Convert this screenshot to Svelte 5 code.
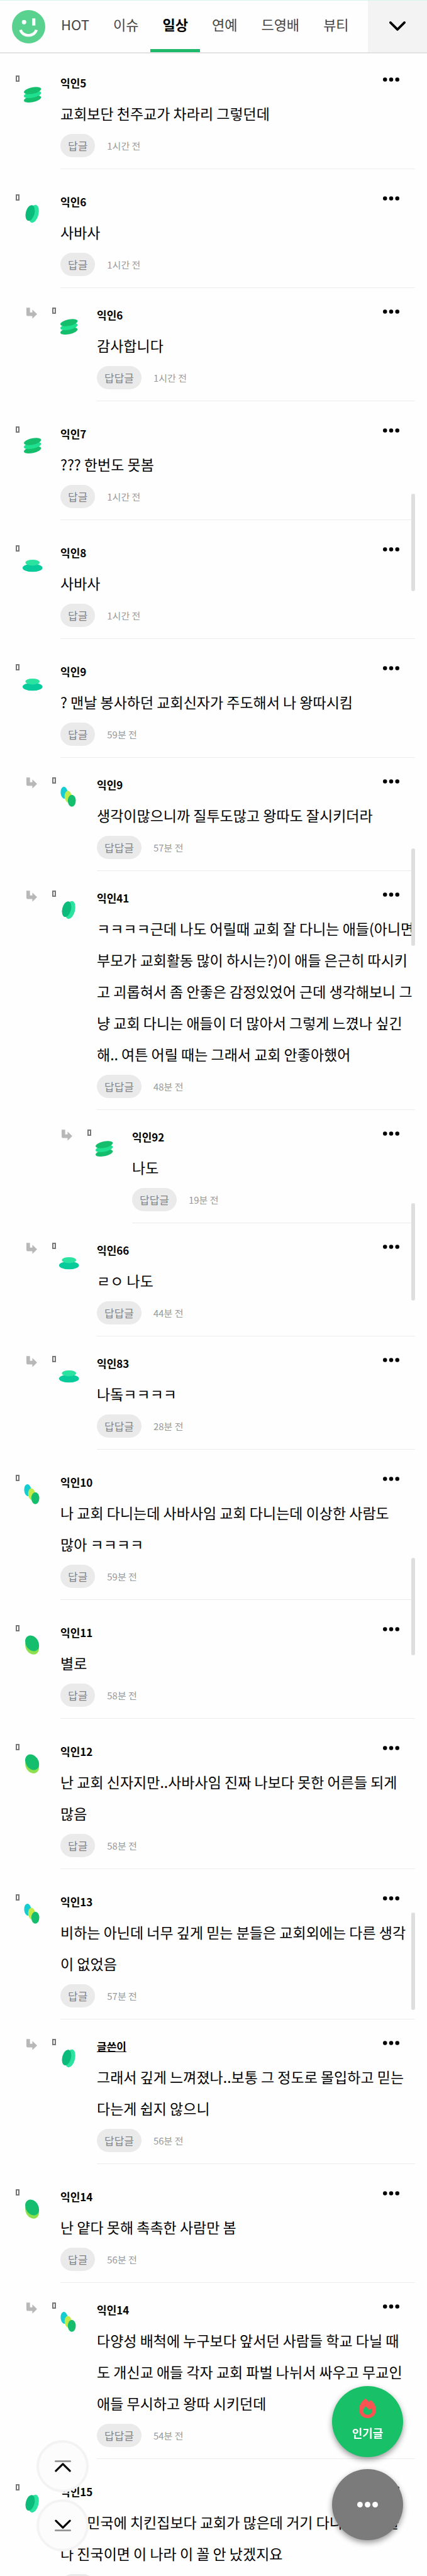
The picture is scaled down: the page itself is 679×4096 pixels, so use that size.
<script lang="ts">
  type Avatar = "stack" | "leaf" | "cup" | "trio" | "pebble"

  interface Comment {
    name: string
    avatar: Avatar
    level: number
    text: string
    time?: string
    writer?: boolean
  }

  const tabs = ["HOT", "이슈", "일상", "연예", "드영배", "뷰티"]
  let activeTab = $state("일상")

  const comments: Comment[] = [
    { name: "익인5", avatar: "stack", level: 0, text: "교회보단 천주교가 차라리 그렇던데", time: "1시간 전" },
    { name: "익인6", avatar: "leaf", level: 0, text: "사바사", time: "1시간 전" },
    { name: "익인6", avatar: "stack", level: 1, text: "감사합니다", time: "1시간 전" },
    { name: "익인7", avatar: "stack", level: 0, text: "??? 한번도 못봄", time: "1시간 전" },
    { name: "익인8", avatar: "cup", level: 0, text: "사바사", time: "1시간 전" },
    { name: "익인9", avatar: "cup", level: 0, text: "? 맨날 봉사하던 교회신자가 주도해서 나 왕따시킴", time: "59분 전" },
    { name: "익인9", avatar: "trio", level: 1, text: "생각이많으니까 질투도많고 왕따도 잘시키더라", time: "57분 전" },
    {
      name: "익인41",
      avatar: "leaf",
      level: 1,
      text: "ㅋㅋㅋㅋ근데 나도 어릴때 교회 잘 다니는 애들(아니면\n부모가 교회활동 많이 하시는?)이 애들 은근히 따시키\n고 괴롭혀서 좀 안좋은 감정있었어 근데 생각해보니 그\n냥 교회 다니는 애들이 더 많아서 그렇게 느꼈나 싶긴\n해.. 여튼 어릴 때는 그래서 교회 안좋아했어",
      time: "48분 전",
    },
    { name: "익인92", avatar: "stack", level: 2, text: "나도", time: "19분 전" },
    { name: "익인66", avatar: "cup", level: 1, text: "ㄹㅇ 나도", time: "44분 전" },
    { name: "익인83", avatar: "cup", level: 1, text: "나돜ㅋㅋㅋㅋ", time: "28분 전" },
    {
      name: "익인10",
      avatar: "trio",
      level: 0,
      text: "나 교회 다니는데 사바사임 교회 다니는데 이상한 사람도\n많아 ㅋㅋㅋㅋ",
      time: "59분 전",
    },
    { name: "익인11", avatar: "pebble", level: 0, text: "별로", time: "58분 전" },
    {
      name: "익인12",
      avatar: "pebble",
      level: 0,
      text: "난 교회 신자지만..사바사임 진짜 나보다 못한 어른들 되게\n많음",
      time: "58분 전",
    },
    {
      name: "익인13",
      avatar: "trio",
      level: 0,
      text: "비하는 아닌데 너무 깊게 믿는 분들은 교회외에는 다른 생각\n이 없었음",
      time: "57분 전",
    },
    {
      name: "글쓴이",
      avatar: "leaf",
      level: 1,
      text: "그래서 깊게 느껴졌나..보통 그 정도로 몰입하고 믿는\n다는게 쉽지 않으니",
      time: "56분 전",
      writer: true,
    },
    { name: "익인14", avatar: "pebble", level: 0, text: "난 얕다 못해 촉촉한 사람만 봄", time: "56분 전" },
    {
      name: "익인14",
      avatar: "trio",
      level: 1,
      text: "다양성 배척에 누구보다 앞서던 사람들 학교 다닐 때\n도 개신교 애들 각자 교회 파벌 나뉘서 싸우고 무교인\n애들 무시하고 왕따 시키던데",
      time: "54분 전",
    },
    {
      name: "익인15",
      avatar: "leaf",
      level: 0,
      text: "대한민국에 치킨집보다 교회가 많은데 거기 다니는 사람들\n다 진국이면 이 나라 이 꼴 안 났겠지요",
    },
  ]

  const thumbs = [0, 1, 2, 3, 4].map((i) => 785 + i * 564)
</script>

{#snippet avatarIcon(kind: Avatar)}
  <svg class="avatar" viewBox="0 0 60 60" aria-hidden="true">
    {#if kind === "stack"}
      <ellipse cx="28" cy="43" rx="22" ry="8" transform="rotate(-12 28 43)" fill="#15be6c" />
      <ellipse cx="28" cy="32" rx="22" ry="8" transform="rotate(-12 28 32)" fill="#1ee08f" />
      <ellipse cx="28" cy="22" rx="22" ry="8" transform="rotate(-12 28 22)" fill="#15be6c" />
    {:else if kind === "leaf"}
      <ellipse cx="31" cy="33" rx="12" ry="23" transform="rotate(14 31 33)" fill="#2be3a0" />
      <ellipse cx="22" cy="31" rx="11" ry="20" transform="rotate(14 22 31)" fill="#0bbb7c" />
    {:else if kind === "cup"}
      <ellipse cx="28" cy="41" rx="25" ry="10" fill="#08cb9c" />
      <ellipse cx="28" cy="28" rx="18" ry="7.5" fill="#2be3a0" />
    {:else if kind === "trio"}
      <ellipse cx="16" cy="23" rx="9" ry="15" transform="rotate(-6 16 23)" fill="#13cdd2" />
      <ellipse cx="26" cy="33" rx="9" ry="15" transform="rotate(-6 26 33)" fill="#c0ea4a" />
      <ellipse cx="35" cy="43" rx="10" ry="15" fill="#15be6c" />
    {:else}
      <ellipse cx="27" cy="39" rx="16" ry="20" transform="rotate(-32 27 39)" fill="#8fe04e" />
      <ellipse cx="27" cy="30" rx="16" ry="21" transform="rotate(-32 27 30)" fill="#15be6c" />
    {/if}
  </svg>
{/snippet}

<div class="page">
  <header>
    <a class="logo" href="#home" aria-label="홈">
      <svg viewBox="0 0 84 84" width="53" height="53">
        <circle cx="42" cy="42" r="42" fill="#5ad28f" />
        <circle cx="30.500" cy="30.500" r="5.500" fill="#fff" />
        <rect x="51" y="21" width="8" height="18" fill="#fff" />
        <path d="M21.500 50a20.500 18 0 0 0 40 0" fill="none" stroke="#fff" stroke-width="7" />
      </svg>
    </a>
    <nav>
      {#each tabs as tab}
        <button class="tab" class:active={tab === activeTab} onclick={() => (activeTab = tab)}>{tab}</button>
      {/each}
    </nav>
    <button class="expand" aria-label="메뉴 펼치기">
      <svg viewBox="0 0 42 26" width="26" height="16">
        <path d="M3 3l18 18L39 3" fill="none" stroke="#000" stroke-width="6" stroke-linecap="round" stroke-linejoin="round" />
      </svg>
    </button>
  </header>

  <ul class="comments">
    {#each comments as comment}
      <li class="comment" class:reply={comment.level > 0} class:deep={comment.level > 1}>
        {#if comment.level > 0}
          <svg class="arrow" viewBox="0 0 27 28" aria-hidden="true">
            <path d="M0 0h9v12h6V5l12 11.500L15 28v-7H3Q0 21 0 18z" fill="#b8b8b8" />
          </svg>
        {/if}
        <div class="side">
          <span class="blank"></span>
          {@render avatarIcon(comment.avatar)}
        </div>
        <article>
          <div class="head">
            <strong class:writer={comment.writer}>{comment.name}</strong>
            <button class="more" aria-label="더보기">
              <svg viewBox="0 0 40 10" width="26" height="7">
                <circle cx="5" cy="5" r="5" />
                <circle cx="20" cy="5" r="5" />
                <circle cx="35" cy="5" r="5" />
              </svg>
            </button>
          </div>
          <p>{comment.text}</p>
          <div class="foot">
            <button class="answer">{comment.level > 0 ? "답답글" : "답글"}</button>
            {#if comment.time}
              <time>{comment.time}</time>
            {/if}
          </div>
        </article>
      </li>
    {/each}
  </ul>

  {#each thumbs as top}
    <span class="thumb" style="top: {top}px"></span>
  {/each}

  <div class="jump">
    <button aria-label="맨 위로">
      <svg viewBox="0 0 42 30" width="26" height="19">
        <path d="M2 2h38" stroke="#8a8a8a" stroke-width="4" stroke-linecap="round" />
        <path d="M3 27L21 9l18 18" fill="none" stroke="#000" stroke-width="5" stroke-linecap="round" stroke-linejoin="round" />
      </svg>
    </button>
    <button aria-label="맨 아래로">
      <svg viewBox="0 0 42 30" width="26" height="19">
        <path d="M3 3l18 18L39 3" fill="none" stroke="#000" stroke-width="5" stroke-linecap="round" stroke-linejoin="round" />
        <path d="M2 28h38" stroke="#8a8a8a" stroke-width="4" stroke-linecap="round" />
      </svg>
    </button>
  </div>

  <div class="floating">
    <button class="hot">
      <svg viewBox="0 0 42 48" width="27" height="31" aria-hidden="true">
        <path
          d="M15 0c3 1 7 5 9 8 2-3 4-4 6-4 6 5 12 14 12 23 0 12-9 21-21 21S0 39 0 27C0 16 8 5 15 0zM16 18c-3 4-6 8-6 12 0 6 5 10 11 10s11-4 11-10c0-2-1-4-2-6l-5 4z"
          fill="#fb5352"
          fill-rule="evenodd"
        />
      </svg>
      인기글
    </button>
    <button class="menu" aria-label="더보기 메뉴">
      <svg viewBox="0 0 52 14" width="33" height="9">
        <circle cx="7" cy="7" r="7" fill="#fff" />
        <circle cx="26" cy="7" r="7" fill="#fff" />
        <circle cx="45" cy="7" r="7" fill="#fff" />
      </svg>
    </button>
  </div>
</div>

<style>
  :global(body) {
    background: #fefefe;
  }

  .page {
    position: relative;
    height: 100vh;
    overflow: hidden;
    color: #000;
    font-family: "Noto Sans CJK KR", "Noto Sans", sans-serif;
  }

  button {
    padding: 0;
    border: 0;
    background: none;
    color: inherit;
    font-family: inherit;
    cursor: pointer;
  }

  svg {
    display: block;
  }

  header {
    display: flex;
    align-items: stretch;
    height: 82px;
    border-top: 1px solid #d9f4ea;
    border-bottom: 2px solid #e2e2e2;
  }

  .logo {
    align-self: center;
    margin: 0 6px 0 19px;
  }

  nav {
    display: flex;
    flex: 1;
  }

  .tab {
    padding: 0 19px 8px;
    border-top: 5px solid transparent;
    border-bottom: 5px solid transparent;
    color: #444;
    font-size: 22px;
    line-height: 32px;
    white-space: nowrap;
  }

  .tab.active {
    border-bottom-color: #1fb96b;
    color: #000;
    font-weight: bold;
  }

  .expand {
    display: flex;
    align-items: center;
    justify-content: center;
    width: 94px;
    background: #f3f3f3;
  }

  .comments {
    margin: 0;
    padding: 0;
    list-style: none;
  }

  .comment {
    display: flex;
    align-items: flex-start;
    padding: 40px 19px 0 25px;
  }

  .comment:first-child {
    padding-top: 35px;
  }

  .comment.reply {
    padding-top: 31px;
    padding-left: 42px;
  }

  .comment.deep {
    padding-left: 98px;
  }

  .arrow {
    width: 17px;
    height: 18px;
    margin-right: 24px;
  }

  .side {
    display: flex;
    flex: none;
    align-items: flex-start;
    gap: 3px;
    width: 71px;
  }

  .blank {
    box-sizing: border-box;
    width: 6px;
    height: 10px;
    border: 2px solid #777;
  }

  .avatar {
    width: 38px;
    height: 38px;
    margin-top: 10px;
  }

  article {
    flex: 1;
    min-width: 0;
    padding-bottom: 18px;
    border-bottom: 1px solid #ececec;
  }

  .head {
    display: flex;
    justify-content: space-between;
    height: 24px;
    padding-right: 25px;
    font-size: 17px;
    line-height: 24px;
  }

  .writer {
    text-decoration: underline;
  }

  .more {
    align-self: flex-start;
    padding: 3px 0;
  }

  p {
    margin: 11px 0 8px;
    font-size: 23px;
    line-height: 50px;
    white-space: pre;
  }

  .foot {
    display: flex;
    align-items: center;
    gap: 19px;
    height: 37px;
  }

  .answer {
    height: 37px;
    padding: 0 12px;
    border-radius: 19px;
    background: #eaeaea;
    color: #858585;
    font-size: 17px;
  }

  time {
    color: #999;
    font-size: 15px;
  }

  .thumb {
    position: absolute;
    right: 19px;
    width: 6px;
    height: 155px;
    border-radius: 3px;
    background: #dedede;
  }

  .jump {
    position: fixed;
    bottom: 39px;
    left: 58px;
    display: flex;
    flex-direction: column;
    gap: 11px;
  }

  .jump button {
    display: flex;
    align-items: center;
    justify-content: center;
    width: 83px;
    height: 83px;
    border: 4px solid #f3f3f3;
    border-radius: 50%;
    background: #fcfcfc;
  }

  .floating {
    position: fixed;
    right: 38px;
    bottom: 57px;
    display: flex;
    flex-direction: column;
    gap: 19px;
  }

  .floating button {
    display: flex;
    flex-direction: column;
    align-items: center;
    justify-content: center;
    width: 113px;
    height: 113px;
    border-radius: 50%;
    box-shadow: 0 4px 10px rgba(0, 0, 0, 0.4);
  }

  .floating .hot {
    gap: 9px;
    padding-bottom: 6px;
    background: #18c067;
    color: #fff;
    font-size: 18px;
    font-weight: bold;
    line-height: 28px;
  }

  .floating .menu {
    background: #7b7b7b;
  }
</style>
